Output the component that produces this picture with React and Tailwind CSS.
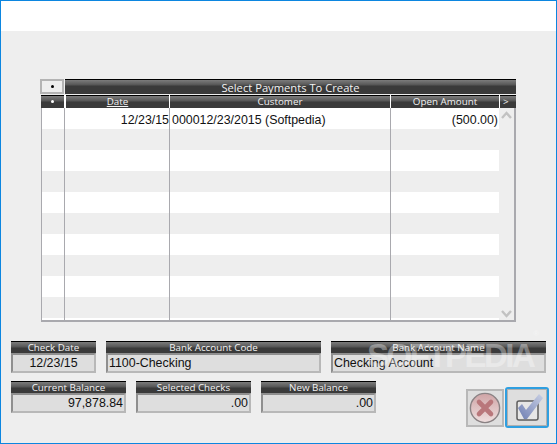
const hdr = "bg-[linear-gradient(#000_0,#000_1px,#7c7c7c_1px,#555_6px,#3a3a3a_7px,#3a3a3a_100%)] text-[#f2f2f2] text-[9.8px] leading-[13px] text-center font-['Open_Sans',sans-serif] whitespace-nowrap";
const cols = "grid grid-cols-[23px_105px_221px_109px_17px]";
const rowCols = "grid grid-cols-[22px_105px_221px_109px]";

function Field({ label, value, align = "text-left", w }) {
  return (
    <div className={`flex flex-col ${w}`}>
      <div className={`h-[12px] ${hdr} overflow-hidden`}>{label}</div>
      <div className={`h-[20px] bg-[#dedede] border-2 border-t-[#8f8f8f] border-l-[#8f8f8f] border-r-[#b8b8b8] border-b-[#b8b8b8] text-[12.4px] leading-[17px] text-[#111] px-px whitespace-nowrap ${align}`}>{value}</div>
    </div>
  );
}

function Chevron({ down }) {
  return (
    <svg width="11" height="8" viewBox="0 0 11 8" className={down ? "rotate-180" : ""}>
      <path d="M1 7 L5.5 2 L10 7" fill="none" stroke="#c2c2c2" strokeWidth="2.4" />
    </svg>
  );
}

export default function App() {
  const rows = Array.from({ length: 10 });
  return (
    <div className="w-[557px] h-[444px] border border-[#0c86e0] bg-[#eeeeee] flex flex-col overflow-hidden relative font-['Liberation_Sans',sans-serif]">
      <div className="h-[30px] bg-white shrink-0" />
      <div className="pl-[40px] pt-[48px]">
        <div className="w-[475px]">
          <div className="flex h-[15px] -ml-px">
            <div className="w-[24px] h-[15px] border-2 border-[#b4b4b4] bg-[#eeeeee] flex items-center justify-center">
              <span className="w-[3px] h-[3px] rounded-full bg-black" />
            </div>
            <div className={`flex-1 ${hdr} !text-[11.2px] !leading-[17px] ml-px`}>Select Payments To Create</div>
          </div>
          <div className={`${cols} h-[13px] mt-px ${hdr}`}>
            <div className="flex items-center justify-center"><span className="w-[3px] h-[3px] rounded-full bg-white" /></div>
            <div className="border-l-2 border-white underline">Date</div>
            <div className="border-l border-white">Customer</div>
            <div className="border-l border-white">Open Amount</div>
            <div className="border-l border-white text-left pl-[3px]">&gt;</div>
          </div>
          <div className="border-l border-r-2 border-b-2 border-[#a9a9ae] h-[214px] flex">
            <div className="w-[457px] bg-white overflow-hidden">
              {rows.map((_, i) => (
                <div key={i} className={`${rowCols} h-[21px] ${i % 2 ? "bg-[#eeeeee]" : "bg-white"} text-[12.4px] leading-[25px] text-[#111]`}>
                  <div />
                  <div className="border-l border-[#a9a9ae] text-right">{i === 0 ? "12/23/15" : ""}</div>
                  <div className="border-l border-[#a9a9ae] pl-[2px] whitespace-nowrap">{i === 0 ? "000012/23/2015 (Softpedia)" : ""}</div>
                  <div className="border-l border-[#a9a9ae] text-right pr-px">{i === 0 ? "(500.00)" : ""}</div>
                </div>
              ))}
              <div className={`${rowCols} h-[2px]`}>
                <div />
                <div className="border-l border-[#a9a9ae]" />
                <div className="border-l border-[#a9a9ae]" />
                <div className="border-l border-[#a9a9ae]" />
              </div>
            </div>
            <div className="flex-1 bg-[#eeeeee] flex flex-col items-center justify-between pt-[3px] pb-[2px]">
              <Chevron />
              <Chevron down />
            </div>
          </div>
        </div>
      </div>
      <div className="pl-[10px] pt-[19px] flex gap-[10px]">
        <Field label="Check Date" value="12/23/15" align="text-center" w="w-[85px]" />
        <Field label="Bank Account Code" value="1100-Checking" w="w-[215px]" />
        <Field label="Bank Account Name" value="Checking Account" w="w-[215px]" />
      </div>
      <div className="pl-[10px] pt-[8px] flex">
        <div className="flex gap-[10px]">
          <Field label="Current Balance" value="97,878.84" align="text-right" w="w-[115px]" />
          <Field label="Selected Checks" value=".00" align="text-right" w="w-[115px]" />
          <Field label="New Balance" value=".00" align="text-right" w="w-[115px]" />
        </div>
        <div className="flex items-center ml-[90px] mt-[6px] gap-px h-[41px]">
          <button className="w-[38px] h-[38px] border-2 border-[#b8b8b8] bg-[#dedede] flex items-center justify-center">
            <svg width="32" height="32" viewBox="0 0 32 32">
              <defs>
                <linearGradient id="xb" x1="0" y1="0" x2="0" y2="1">
                  <stop offset="0" stopColor="#cfa4a6" />
                  <stop offset="1" stopColor="#efdfdf" />
                </linearGradient>
              </defs>
              <circle cx="16" cy="16" r="14.6" fill="url(#xb)" stroke="#8a8284" strokeWidth="1.4" />
              <path d="M10 10 L22 22 M22 10 L10 22" stroke="#b9777b" strokeWidth="4.6" strokeLinecap="round" />
            </svg>
          </button>
          <button className="w-[44px] h-[41px] border-2 border-[#2f9fe0] rounded-[3px] bg-[#dedede] flex items-center justify-center">
            <svg width="40" height="37" viewBox="0 0 40 37">
              <defs>
                <linearGradient id="ck" x1="0" y1="1" x2="1" y2="0">
                  <stop offset="0" stopColor="#6d7db2" />
                  <stop offset="1" stopColor="#c9d0e4" />
                </linearGradient>
              </defs>
              <rect x="0.5" y="0.5" width="39" height="36" fill="none" stroke="#b0b0b0" />
              <rect x="10" y="12" width="21" height="19" rx="2" fill="#e6e6e6" stroke="#5e5e5e" strokeWidth="1.5" />
              <path d="M11 19 L15 15 L19 21 L32 5 L36 9 L20 30 L17 30 Z" fill="url(#ck)" />
            </svg>
          </button>
        </div>
      </div>
      <div className="absolute left-[366px] top-[337px] text-[33px] leading-[36px] font-bold text-white/35 pointer-events-none tracking-[-2.5px]">SOFTPEDIA<sup className="text-[8px] tracking-normal align-top">®</sup></div>
    </div>
  );
}
